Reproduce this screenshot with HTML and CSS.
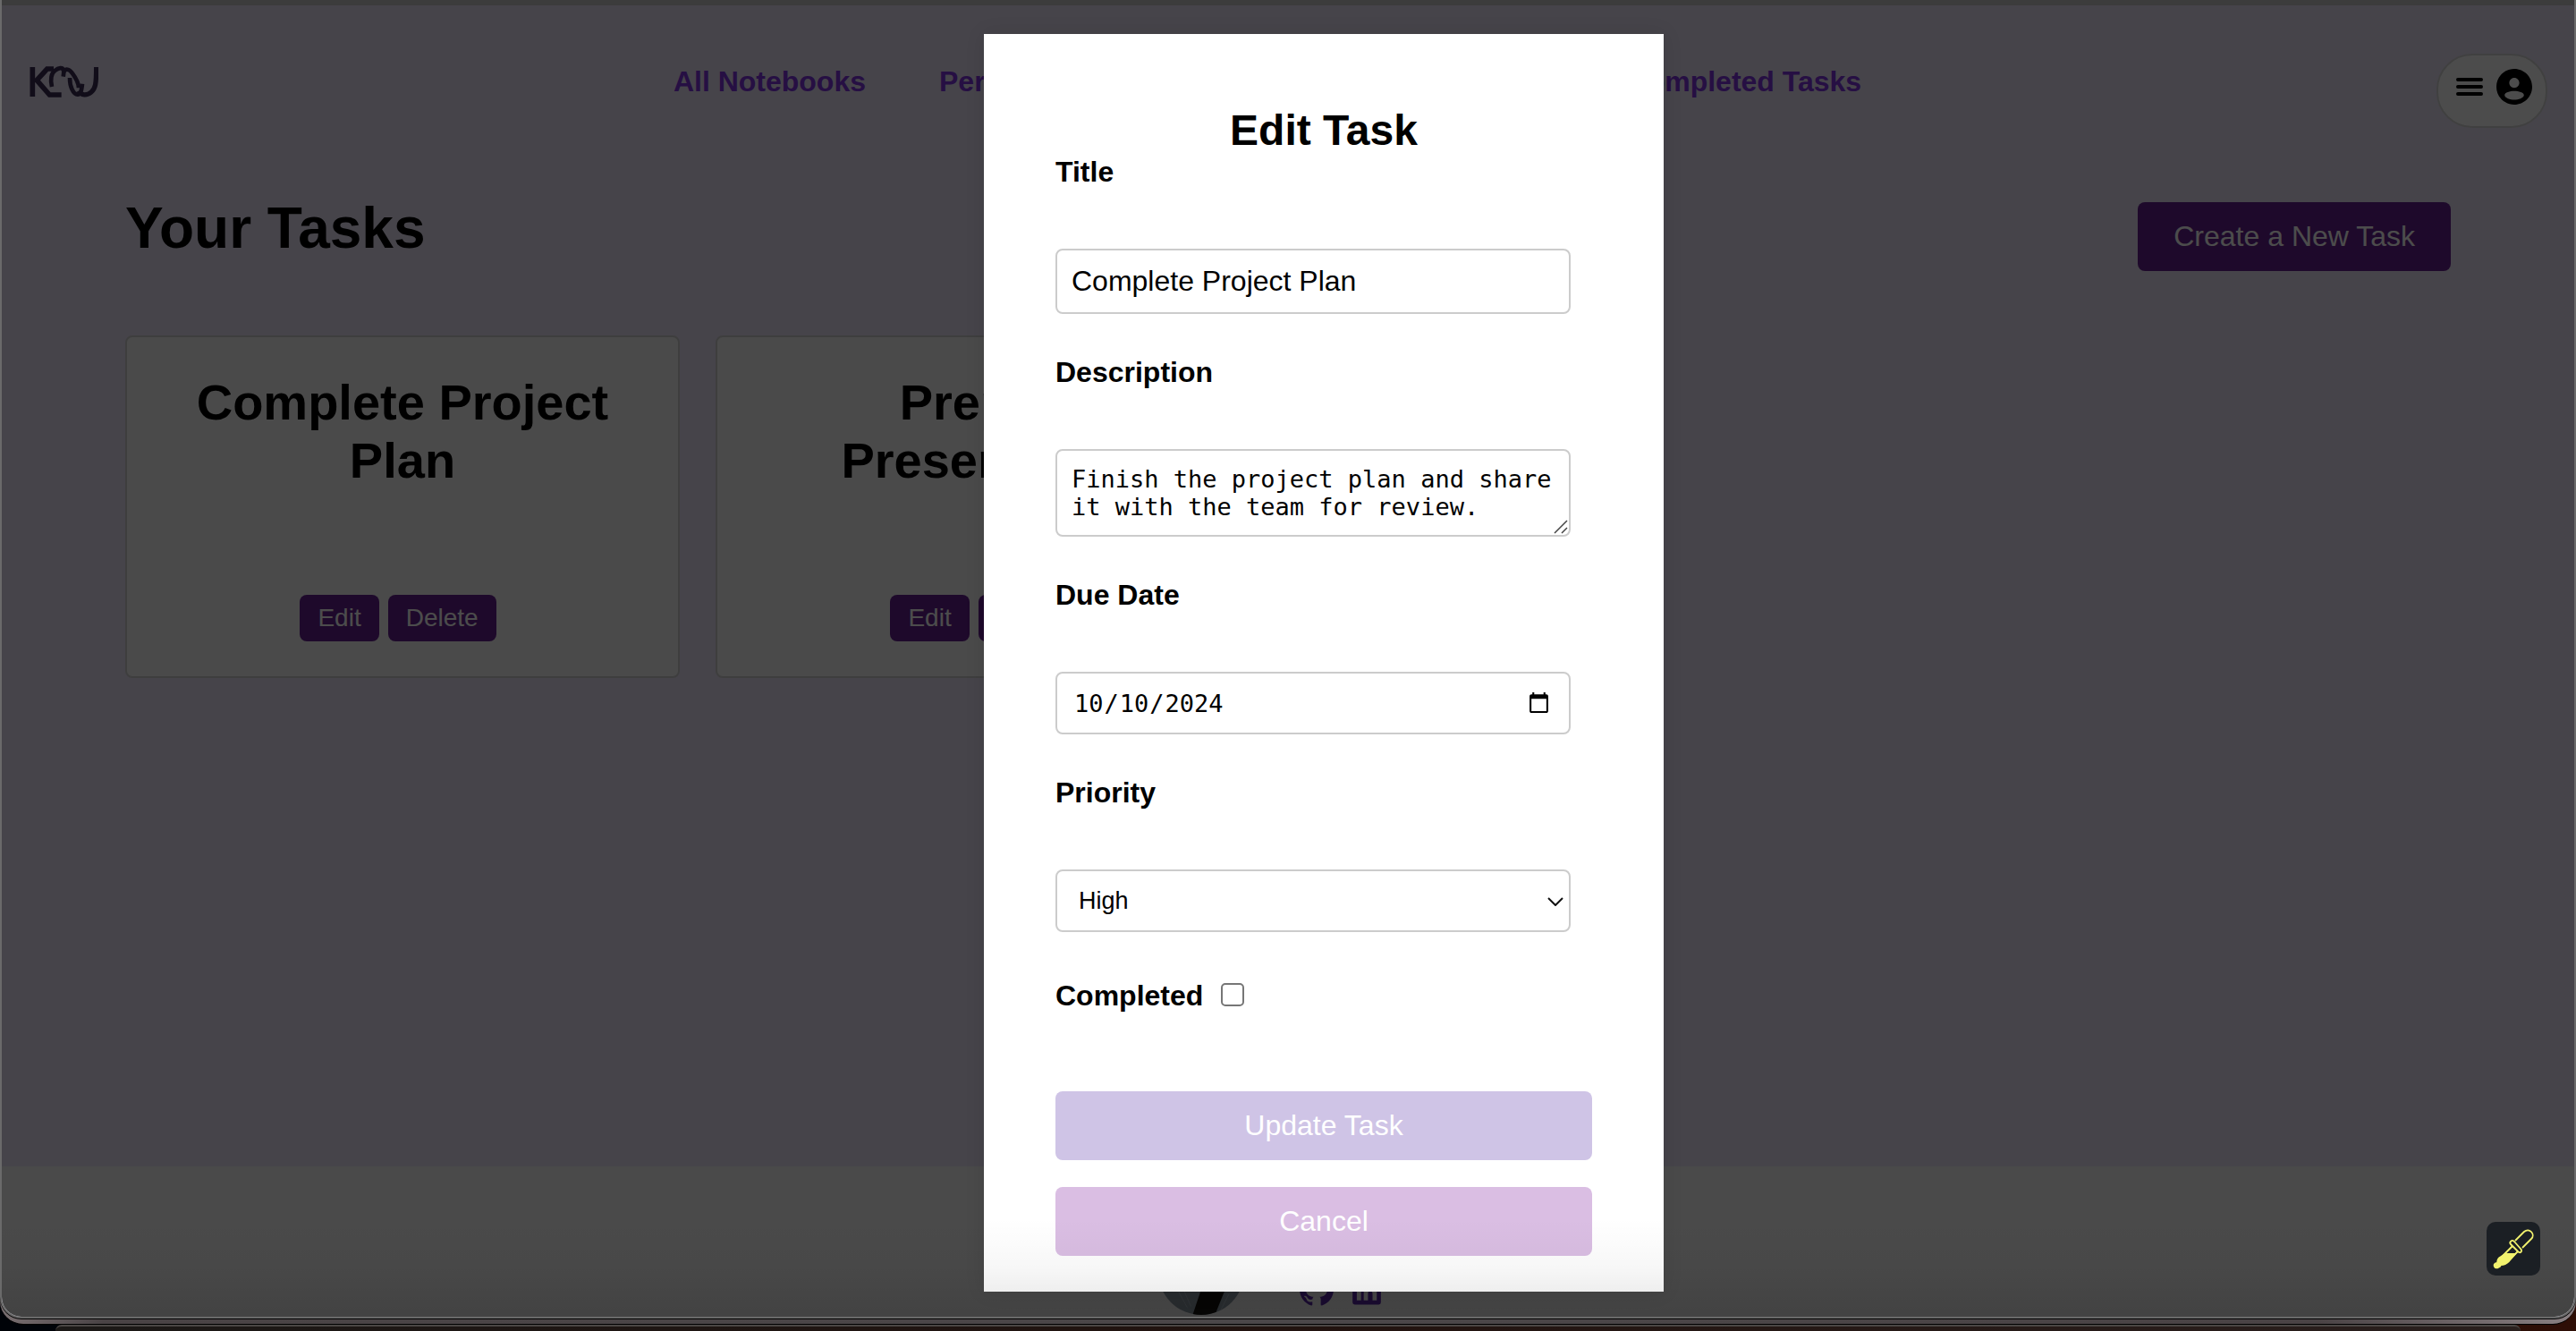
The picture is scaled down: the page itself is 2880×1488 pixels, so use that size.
FILE: index.html
```html
<!DOCTYPE html>
<html lang="en-US">
<head>
<meta charset="utf-8">
<title>Your Tasks</title>
<link rel="stylesheet" href="styles.css">
</head>
<body>
<div class="desktop">
  <div class="shell">
    <div class="window">
      <header class="header">
        <a class="logo" href="#" aria-label="Home">
          <svg viewBox="36 30 234 120" fill="none" stroke="#3a2d55" stroke-width="17">
            <path d="M49 42V141M58 92L98 48H120M60 82L106 135H146"/>
            <path d="M114 108C108 84 112 62 124 54C136 44 150 42 153 52C155 58 154 62 152 74" stroke-width="14"/>
            <path d="M154 58C160 46 172 48 182 62C194 78 204 94 204 112" stroke-width="14"/>
            <path d="M174 78C174 108 186 134 200 134C212 134 214 116 216 98" stroke-width="14"/>
            <path d="M204 122C212 138 232 138 246 126C260 114 263 100 263 42" stroke-width="16"/>
          </svg>
        </a>
        <nav class="nav">
          <a href="#">All Notebooks</a>
          <a href="#">Personal Notebooks</a>
          <a href="#">Meeting Notebooks</a>
          <a href="#">Completed Tasks</a>
        </nav>
        <button class="account" type="button" aria-label="Account menu">
          <svg class="account-menu" viewBox="0 0 30 20" stroke="#000" stroke-width="4" stroke-linecap="round"><path d="M2 2H28M2 10H28M2 18H28"/></svg>
          <svg class="account-user" viewBox="2 2 20 20"><path d="M12 2C6.48 2 2 6.48 2 12s4.480 10 10 10 10-4.480 10-10S17.520 2 12 2zm0 5c1.550 0 2.800 1.250 2.800 2.800S13.550 12.600 12 12.600 9.200 11.350 9.200 9.800 10.450 7 12 7zm0 12.300c-2.300 0-5.400-1.100-5.400-2.700 0-1.400 3-2.200 5.400-2.200s5.400.8 5.400 2.200c0 1.600-3.100 2.700-5.400 2.700z"/></svg>
        </button>
      </header>

      <main class="main">
        <div class="main-head">
          <h1>Your Tasks</h1>
          <button class="btn btn-create" type="button">Create a New Task</button>
        </div>
        <div class="cards">
          <article class="card">
            <h2>Complete Project Plan</h2>
            <div class="card-actions">
              <button class="btn btn-small" type="button">Edit</button>
              <button class="btn btn-small" type="button">Delete</button>
            </div>
          </article>
          <article class="card">
            <h2>Prepare Presentation</h2>
            <div class="card-actions">
              <button class="btn btn-small" type="button">Edit</button>
              <button class="btn btn-small" type="button">Delete</button>
            </div>
          </article>
        </div>
      </main>

      <footer class="footer">
        <svg class="photo" viewBox="0 0 100 100">
          <defs><clipPath id="round"><circle cx="50" cy="50" r="50"/></clipPath></defs>
          <g clip-path="url(#round)">
            <path fill="#8d9aa6" d="M0 0H100V100H0z"/>
            <path fill="#16130f" d="M50 70H78L66 100H40z"/>
            <path stroke="#a9b4bd" d="M22 70L34 92M30 72L38 90M82 76L72 96" fill="none"/>
          </g>
        </svg>
        <div class="social">
          <a href="#" aria-label="GitHub"><svg viewBox="0 0 24 24"><path d="M12 .297c-6.630 0-12 5.373-12 12 0 5.303 3.438 9.800 8.205 11.385.6.113.82-.258.82-.577 0-.285-.01-1.040-.015-2.040-3.338.724-4.042-1.610-4.042-1.610C4.422 18.070 3.633 17.700 3.633 17.700c-1.087-.744.084-.729.084-.729 1.205.084 1.838 1.236 1.838 1.236 1.070 1.835 2.809 1.305 3.495.998.108-.776.417-1.305.76-1.605-2.665-.3-5.466-1.332-5.466-5.930 0-1.310.465-2.380 1.235-3.220-.135-.303-.54-1.523.105-3.176 0 0 1.005-.322 3.300 1.230.96-.267 1.980-.399 3-.405 1.020.006 2.040.138 3 .405 2.280-1.552 3.285-1.230 3.285-1.230.645 1.653.24 2.873.12 3.176.765.84 1.230 1.910 1.230 3.220 0 4.610-2.805 5.625-5.475 5.920.42.36.81 1.096.81 2.220 0 1.606-.015 2.896-.015 3.286 0 .315.21.69.825.57C20.565 22.092 24 17.592 24 12.297c0-6.627-5.373-12-12-12"/></svg></a>
          <a href="#" aria-label="LinkedIn"><svg viewBox="0 0 24 24"><path fill-rule="evenodd" d="M3.500 3h17A1.500 1.500 0 0 1 22 4.500v17a1.500 1.500 0 0 1-1.500 1.500h-17A1.500 1.500 0 0 1 2 21.500v-17A1.500 1.500 0 0 1 3.500 3zM5 10.600v9.400h3V10.600zM6.500 5.900a1.700 1.700 0 1 0 0 3.400 1.700 1.700 0 0 0 0-3.400zM9.900 10.600v9.400h3v-4.700c0-2.900 3.200-2.700 3.200 0v4.700h3v-5.600c0-4.700-4.800-4.800-6.200-2.300V10.600z"/></svg></a>
        </div>
      </footer>

      <div class="overlay">
        <form class="modal" role="dialog" aria-labelledby="modal-title">
          <h2 id="modal-title">Edit Task</h2>
          <label for="title">Title</label>
          <input class="field field-title" id="title" type="text" value="Complete Project Plan">
          <label for="description">Description</label>
          <div class="field-wrap">
            <textarea class="field field-mono" id="description" rows="2">Finish the project plan and share it with the team for review.</textarea>
            <svg class="grip" viewBox="0 0 16 16" fill="none" stroke="#444" stroke-width="1.500"><path d="M1 15L15 1M9 15L15 9"/></svg>
          </div>
          <label for="due">Due Date</label>
          <input class="field field-mono field-date" id="due" type="date" value="2024-10-10">
          <label for="priority">Priority</label>
          <div class="field-wrap">
            <select class="field field-select" id="priority">
              <option>Low</option>
              <option>Medium</option>
              <option selected>High</option>
            </select>
            <svg class="chevron" viewBox="0 0 18 10" fill="none" stroke="#111" stroke-width="2"><path d="M1 1L9 9L17 1"/></svg>
          </div>
          <div class="check-row">
            <label for="completed">Completed</label>
            <input id="completed" type="checkbox">
          </div>
          <div class="modal-actions">
            <button class="btn btn-update" type="submit">Update Task</button>
            <button class="btn btn-cancel" type="button">Cancel</button>
          </div>
        </form>
      </div>

      <button class="picker" type="button" aria-label="Pick a color">
        <svg viewBox="0 0 60 60" fill="none" stroke="#f2f26e" stroke-width="1.800" stroke-linejoin="round">
          <path d="M32 21L42 11C48 6 55 14 50 19L40 29"/>
          <path d="M27 22C28 20 30 21 31 22L38 30C41 33 37 36 35 33L27 25C26 24 26 23 27 22z"/>
          <path d="M29 27L18 38L13 44M35 33L24 44"/>
          <path fill="#f2f26e" d="M21 36H32L25 44C22 47 19 48 16 48C14 52 10 52 9 50C8 48 9 46 12 46C12 42 14 40 16 39z"/>
        </svg>
      </button>
    </div>
  </div>
  <div class="dock"></div>
</div>
</body>
</html>
```
FILE: styles.css
```css
* { box-sizing: border-box; }

body {
  margin: 0;
  font-family: "Liberation Sans", Arial, sans-serif;
  font-size: 32px;
  line-height: 37px;
  color: #000;
}

button, input, select, textarea { font: inherit; color: inherit; margin: 0; }
h1, h2 { margin: 0; }
svg { display: block; }

.desktop {
  display: flex;
  flex-direction: column;
  height: 100vh;
  overflow: hidden;
  background: linear-gradient(90deg, #000308 50%, #2e0e06);
}

.shell {
  display: flex;
  flex: 1;
  min-height: 0;
  padding-bottom: 6px;
  border-bottom: 1px solid #000;
  border-radius: 0 0 26px 26px;
  background: linear-gradient(90deg, #7a7072, #4a4345 4%, #4b4749 50%, #4a4345 90%, #8a8083);
}

.window {
  position: relative;
  display: flex;
  flex-direction: column;
  flex: 1;
  overflow: hidden;
  border: 2px solid #6a6a6a;
  border-top: 0;
  border-radius: 0 0 24px 24px;
  box-shadow: 0 1px 0 #000;
  background: #e9e3f7;
}

.header {
  display: flex;
  align-items: flex-start;
  justify-content: space-between;
  padding: 54px 30px 0;
  border-top: 6px solid #c8c8c8;
}

.logo { width: 78px; padding-top: 11px; }

.nav { display: flex; gap: 82px; padding-top: 13px; }
.nav a { color: #8132e0; font-weight: bold; text-decoration: none; }

.account {
  display: flex;
  align-items: center;
  gap: 15px;
  width: 124px;
  height: 83px;
  padding: 0 0 9px 20px;
  border: 2px solid #d8d8d8;
  border-radius: 40px;
  background: #fff;
}
.account-menu { width: 30px; }
.account-user { width: 40px; }

.main { flex: 1; padding: 75px 138px 0; }

.main-head {
  display: flex;
  align-items: flex-start;
  justify-content: space-between;
  margin-bottom: 72px;
}
.main-head h1 { font-size: 64px; line-height: 74px; }

.btn {
  padding: 20px 40px;
  border: 0;
  border-radius: 8px;
  background: #64218f;
  color: #fff;
}
.btn-create { margin-top: 8px; }
.btn-small { padding: 10px 20px; font-size: 28px; line-height: 32px; }

.cards { display: grid; grid-template-columns: repeat(4, 1fr); gap: 40px; }

.card {
  padding: 40px 40px 39px;
  border: 2px solid #d0d0d0;
  border-radius: 8px;
  background: #f9f9f9;
  text-align: center;
}
.card h2 { margin-bottom: 118px; font-size: 56px; line-height: 65px; }
.card-actions { display: flex; justify-content: center; gap: 10px; padding-right: 10px; }

.footer {
  display: flex;
  align-items: flex-end;
  justify-content: center;
  gap: 62px;
  padding: 70px 38px 2px 0;
  background: #f7f7f7;
}
.photo { width: 96px; height: 96px; }
.social { display: flex; gap: 18px; padding-bottom: 10px; }
.social svg { width: 38px; height: 38px; fill: #5c2aa8; }

.overlay {
  position: absolute;
  inset: 0;
  display: flex;
  align-items: flex-start;
  justify-content: center;
  padding: 38px 0 0 80px;
  background: rgba(0, 0, 0, 0.7);
}
.overlay::after {
  content: "";
  position: absolute;
  inset: auto 0 0;
  height: 110px;
  background: linear-gradient(transparent, rgba(0, 0, 0, 0.03) 50%, rgba(0, 0, 0, 0.1));
  pointer-events: none;
}

.modal {
  display: flex;
  flex-direction: column;
  width: 760px;
  padding: 80px 80px 40px;
  background: #fff;
  box-shadow: 0 0 20px rgba(0, 0, 0, 0.1);
}
.modal h2 { font-size: 48px; line-height: 56px; text-align: center; }
.modal label { font-weight: bold; margin-bottom: 67px; }

.field {
  display: block;
  width: 576px;
  padding: 16px;
  margin-bottom: 47px;
  border: 2px solid #ccc;
  border-radius: 8px;
  background: #fff;
}
.field-mono { font-family: "DejaVu Sans Mono", monospace; font-size: 27px; line-height: 31px; }
.field-wrap { position: relative; width: 576px; }

textarea.field { height: 98px; resize: none; overflow: hidden; }
.grip { position: absolute; right: 3px; bottom: 50px; width: 16px; }

.field-date { height: 70px; padding: 16px 18px; }

.field-select {
  height: 70px;
  padding: 0 24px;
  margin-bottom: 53px;
  appearance: none;
  font-size: 27px;
  line-height: 31px;
}
.chevron { position: absolute; top: 31px; right: 8px; width: 18px; pointer-events: none; }

.check-row { display: flex; gap: 20px; margin-bottom: 88px; }
.check-row label { margin: 0; }
.check-row input {
  width: 26px;
  height: 26px;
  margin-top: 4px;
  appearance: none;
  border: 2px solid #767676;
  border-radius: 5px;
  background: #fff;
}

.modal-actions { display: flex; flex-direction: column; gap: 30px; }
.btn-update { background: #cfc4e6; }
.btn-cancel { background: #dabee3; }

.picker {
  position: absolute;
  right: 38px;
  bottom: 46px;
  width: 60px;
  height: 60px;
  padding: 0;
  border: 0;
  border-radius: 10px;
  background: #1b1f24;
}

.dock {
  height: 7px;
  margin: 0 62px;
  border-top: 2px solid #4a4644;
  border-radius: 20px 20px 0 0;
  background: linear-gradient(90deg, #1c1917, #22130f 50%, #2a201e);
}
```
